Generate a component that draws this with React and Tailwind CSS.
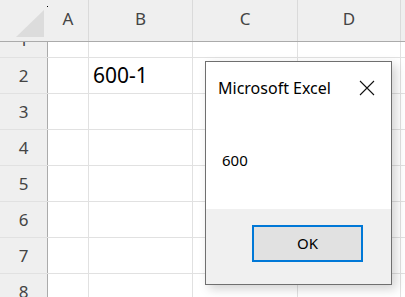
import React from 'react';

const cols = [
  { label: 'A', w: 'w-[41px]' },
  { label: 'B', w: 'w-[104px]' },
  { label: 'C', w: 'w-[105px]' },
  { label: 'D', w: 'w-[103px]' },
];

const rows = [1, 2, 3, 4, 5, 6, 7, 8];

const Sheet = () => (
  <div className="flex flex-col h-full">
    {/* column headers */}
    <div className="flex h-[42px] shrink-0 bg-[#efefef] border-b border-[#ababab]">
      <div className="relative w-[48px] shrink-0">
        <div className="absolute left-[16px] top-[10px] w-0 h-0 border-l-[28px] border-l-transparent border-b-[27px] border-b-[#dcdcdc]" />
        <div className="absolute left-[47px] top-[6px] w-px h-px bg-black" />
      </div>
      {cols.map((c) => (
        <div
          key={c.label}
          className={`${c.w} shrink-0 border-r border-[#dadada] flex items-center justify-center text-[17px] text-[#444] pb-[4px]`}
        >
          {c.label}
        </div>
      ))}
      <div className="flex-1" />
    </div>
    {/* rows */}
    <div className="flex-1 overflow-hidden">
      <div className="mt-[-20px]">
        {rows.map((r) => (
          <div key={r} className="flex h-[36px] border-b border-[#e1e1e1]">
            <div className="w-[48px] shrink-0 bg-[#efefef] border-r border-[#ababab] flex items-center justify-center text-[17px] text-[#444]">
              {r}
            </div>
            {cols.map((c) => (
              <div
                key={c.label}
                className={`${c.w} shrink-0 border-r border-[#e1e1e1] flex items-center text-[21px] text-black`}
              >
                {r === 2 && c.label === 'B' ? <span className="pl-[4px]">600-1</span> : null}
              </div>
            ))}
            <div className="flex-1" />
          </div>
        ))}
      </div>
    </div>
  </div>
);

const Dialog = () => (
  <div className="absolute left-[205px] top-[61px] w-[187px] h-[224px] bg-white border border-[#6f6f6f] shadow-[4px_4px_10px_rgba(0,0,0,0.18)] flex flex-col">
    <div className="flex items-center justify-between h-[50px] pl-[12px] pr-[16px] pt-[2px]">
      <span className="text-[16px] text-black">Microsoft Excel</span>
      <svg width="16" height="16" viewBox="0 0 16 16" fill="none" stroke="#111" strokeWidth="1.1">
        <path d="M1 1 L15 15 M15 1 L1 15" />
      </svg>
    </div>
    <div className="flex-1 pl-[16px] pt-[37px] text-[15px] text-black">600</div>
    <div className="h-[75px] bg-[#f0f0f0] flex justify-end pt-[16px] pr-[28px]">
      <button className="w-[111px] h-[37px] bg-[#e1e1e1] border-2 border-[#0078d7] text-[15px] text-black">
        OK
      </button>
    </div>
  </div>
);

export default function App() {
  return (
    <div
      className="relative w-[405px] h-[297px] overflow-hidden bg-white"
      style={{ fontFamily: '"Noto Sans", "Open Sans", sans-serif' }}
    >
      <Sheet />
      <Dialog />
    </div>
  );
}
